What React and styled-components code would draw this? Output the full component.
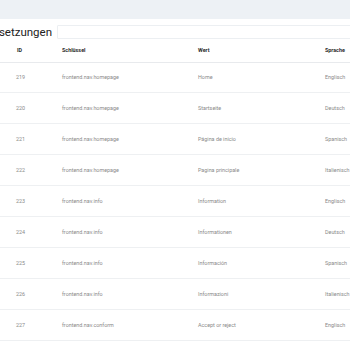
import React from "react";
import styled, { createGlobalStyle } from "styled-components";

const rows = [
  { id: 219, key: "frontend.nav.homepage", value: "Home", lang: "Englisch" },
  { id: 220, key: "frontend.nav.homepage", value: "Startseite", lang: "Deutsch" },
  { id: 221, key: "frontend.nav.homepage", value: "Página de inicio", lang: "Spanisch" },
  { id: 222, key: "frontend.nav.homepage", value: "Pagina principale", lang: "Italienisch" },
  { id: 223, key: "frontend.nav.info", value: "Information", lang: "Englisch" },
  { id: 224, key: "frontend.nav.info", value: "Informationen", lang: "Deutsch" },
  { id: 225, key: "frontend.nav.info", value: "Información", lang: "Spanisch" },
  { id: 226, key: "frontend.nav.info", value: "Informazioni", lang: "Italienisch" },
  { id: 227, key: "frontend.nav.conform", value: "Accept or reject", lang: "Englisch" },
];

export default function App() {
  return (
    <>
      <GlobalStyle />
      <Page>
        <TopBar />
        <TitleRow>
          <Title>Übersetzungen</Title>
          <Search type="text" />
        </TitleRow>
        <Table>
          <colgroup>
            <col style={{ width: 56 }} />
            <col style={{ width: 136 }} />
            <col style={{ width: 127 }} />
            <col style={{ width: 80 }} />
          </colgroup>
          <thead>
            <tr>
              <Th $first>ID</Th>
              <Th>Schlüssel</Th>
              <Th>Wert</Th>
              <Th>Sprache</Th>
            </tr>
          </thead>
          <tbody>
            {rows.map((r) => (
              <tr key={r.id}>
                <Td $first>{r.id}</Td>
                <Td>{r.key}</Td>
                <Td>{r.value}</Td>
                <Td>{r.lang}</Td>
              </tr>
            ))}
          </tbody>
        </Table>
      </Page>
    </>
  );
}

const GlobalStyle = createGlobalStyle`
  html, body {
    margin: 0;
    overflow: hidden;
    background: #fff;
    font-family: Roboto, "Liberation Sans", sans-serif;
  }
`;

const Page = styled.div`
  width: 350px;
  height: 350px;
  overflow: hidden;
`;

const TopBar = styled.div`
  height: 19px;
  background: #edf1f5;
`;

const TitleRow = styled.div`
  height: 20px;
  display: flex;
  align-items: flex-end;
  gap: 5px;
  margin-left: -25px;
`;

const Title = styled.h1`
  margin: 0;
  font-size: 11.5px;
  font-weight: 400;
  line-height: 14px;
  color: #222;
  white-space: nowrap;
`;

const Search = styled.input`
  flex: 1;
  height: 14px;
  box-sizing: border-box;
  border: 1px solid #eceff2;
  border-radius: 1px;
  padding: 0;
  outline: none;
  min-width: 320px;
`;

const Table = styled.table`
  border-collapse: collapse;
  table-layout: fixed;
  width: 399px;
  font-size: 5.4px;
`;

const Th = styled.th`
  height: 23px;
  padding: 0 0 0 ${(p) => (p.$first ? "17px" : "6px")};
  text-align: left;
  font-weight: 700;
  color: #2b2b2b;
  border-bottom: 1px solid #e8eaed;
  white-space: nowrap;
  box-sizing: border-box;
`;

const Td = styled.td`
  height: 30.9px;
  padding: 0 0 0 ${(p) => (p.$first ? "16px" : "6px")};
  color: #8a8a8a;
  border-bottom: 1px solid #eef0f2;
  white-space: nowrap;
  box-sizing: border-box;
`;
